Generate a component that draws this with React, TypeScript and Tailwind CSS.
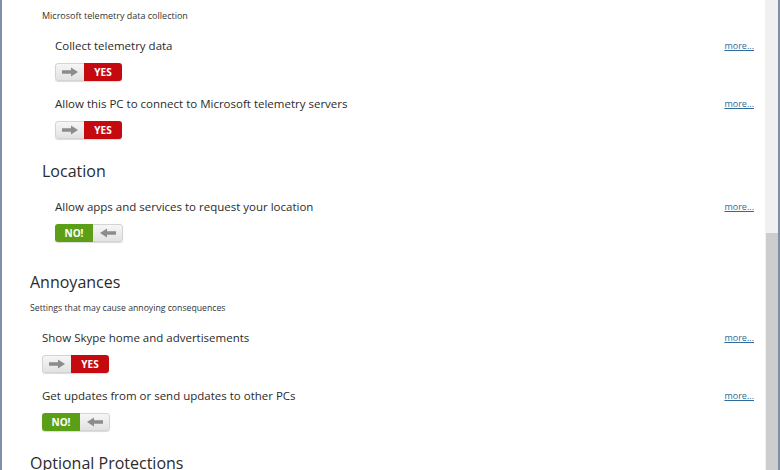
import React from "react";

type Item = { label: string; on: boolean };

function Arrow({ dir }: { dir: "right" | "left" }) {
  return (
    <svg width="18" height="10" viewBox="0 0 18 10" className={dir === "left" ? "rotate-180" : ""}>
      <path d="M1 3.2h9V0.5L17 5l-7 4.5V6.8H1z" fill="#8c8c8c" />
    </svg>
  );
}

function Toggle({ on }: { on: boolean }) {
  if (on) {
    return (
      <div className="flex h-[18px] w-[67px] overflow-hidden rounded-[3px] shadow-[0_1px_1px_rgba(0,0,0,0.15)]">
        <div className="flex w-[29px] items-center justify-center border border-r-0 border-[#d4d4d4] bg-gradient-to-b from-[#f6f6f6] to-[#e2e2e2] rounded-l-[3px]">
          <Arrow dir="right" />
        </div>
        <div className="flex flex-1 items-center justify-center bg-[#c50a0f] text-[10px] font-bold text-white">
          YES
        </div>
      </div>
    );
  }
  return (
    <div className="flex h-[18px] w-[68px] overflow-hidden rounded-[3px] shadow-[0_1px_1px_rgba(0,0,0,0.15)]">
      <div className="flex w-[38px] items-center justify-center bg-[#5a9f16] text-[10px] font-bold text-white">
        NO!
      </div>
      <div className="flex flex-1 items-center justify-center border border-l-0 border-[#d4d4d4] bg-gradient-to-b from-[#f6f6f6] to-[#e2e2e2] rounded-r-[3px]">
        <Arrow dir="left" />
      </div>
    </div>
  );
}

function Setting({ item, className }: { item: Item; className: string }) {
  return (
    <div className={className}>
      <div className="flex items-center justify-between">
        <span className="text-[11.5px] leading-[18px] text-[#2b2b2b]">{item.label}</span>
        <a className="mr-[1px] text-[9px] leading-[18px] text-[#2f6b9a] underline">more...</a>
      </div>
      <div className="mt-2">
        <Toggle on={item.on} />
      </div>
    </div>
  );
}

export default function App() {
  return (
    <div
      className="flex h-[470px] w-[780px] overflow-hidden bg-white"
      style={{ fontFamily: '"Open Sans", "Noto Sans", sans-serif' }}
    >
      <div className="w-[2px] bg-[#7f8fa8]" />
      <div className="flex-1 border-r border-[#f0f0f0] pl-[28px] pr-[10px]">
        <div className="pl-[12px]">
          <p className="mt-[10px] text-[9px] leading-[12px] text-[#333]">
            Microsoft telemetry data collection
          </p>
          <div className="pl-[13px]">
            <Setting className="mt-[15px]" item={{ label: "Collect telemetry data", on: true }} />
            <Setting
              className="mt-[14px]"
              item={{ label: "Allow this PC to connect to Microsoft telemetry servers", on: true }}
            />
          </div>
          <h3 className="mt-[20px] text-[16px] leading-[24px] text-[#2b2b2b]">Location</h3>
          <div className="pl-[13px]">
            <Setting
              className="mt-[15px]"
              item={{ label: "Allow apps and services to request your location", on: false }}
            />
          </div>
        </div>
        <h2 className="mt-[28px] text-[16px] leading-[24px] text-[#2b2b2b]">Annoyances</h2>
        <p className="mt-[8px] text-[8.7px] leading-[12px] text-[#333]">
          Settings that may cause annoying consequences
        </p>
        <div className="pl-[12px]">
          <Setting className="mt-[15px]" item={{ label: "Show Skype home and advertisements", on: true }} />
          <Setting
            className="mt-[14px]"
            item={{ label: "Get updates from or send updates to other PCs", on: false }}
          />
        </div>
        <h2 className="mt-[20px] text-[16px] leading-[24px] text-[#2b2b2b]">Optional Protections</h2>
      </div>
      <div className="flex w-[12px] flex-col bg-[#f0f0f0]">
        <div className="h-[233px]" />
        <div className="flex-1 bg-[#cdcdcd]" />
      </div>
      <div className="w-[2px] bg-[#7f8fa8]" />
    </div>
  );
}
